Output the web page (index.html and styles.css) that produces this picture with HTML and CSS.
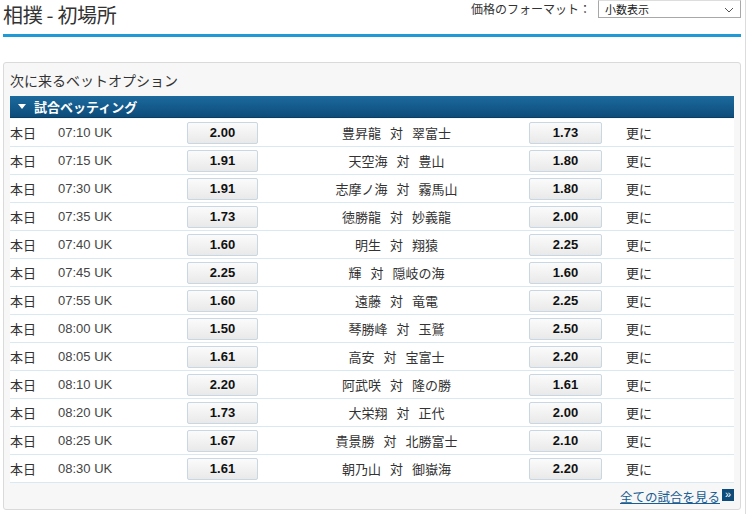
FILE: index.html
```html
<!DOCTYPE html>
<html lang="ja">
<head>
<meta charset="utf-8">
<title>相撲 - 初場所</title>
<link rel="stylesheet" href="styles.css">
</head>
<body>
<div class="page">
  <header class="top">
    <h1 class="title">相撲 - 初場所</h1>
    <div class="format">
      <span class="format-label">価格のフォーマット：</span>
      <div class="select">
        <span>小数表示</span>
        <svg class="chev" width="10" height="6" viewBox="0 0 10 6"><path d="M1 1 L5 5 L9 1" fill="none" stroke="#555" stroke-width="1"/></svg>
      </div>
    </div>
  </header>
  <section class="box">
    <h2 class="box-title">次に来るベットオプション</h2>
    <div class="bar"><span class="tri"></span>試合ベッティング</div>
    <div class="rows">
      <div class="row"><span class="day">本日</span><span class="time">07:10 UK</span><span class="odd">2.00</span><span class="match">豊昇龍<i>対</i>翠富士</span><span class="odd">1.73</span><span class="more">更に</span></div>
      <div class="row"><span class="day">本日</span><span class="time">07:15 UK</span><span class="odd">1.91</span><span class="match">天空海<i>対</i>豊山</span><span class="odd">1.80</span><span class="more">更に</span></div>
      <div class="row"><span class="day">本日</span><span class="time">07:30 UK</span><span class="odd">1.91</span><span class="match">志摩ノ海<i>対</i>霧馬山</span><span class="odd">1.80</span><span class="more">更に</span></div>
      <div class="row"><span class="day">本日</span><span class="time">07:35 UK</span><span class="odd">1.73</span><span class="match">徳勝龍<i>対</i>妙義龍</span><span class="odd">2.00</span><span class="more">更に</span></div>
      <div class="row"><span class="day">本日</span><span class="time">07:40 UK</span><span class="odd">1.60</span><span class="match">明生<i>対</i>翔猿</span><span class="odd">2.25</span><span class="more">更に</span></div>
      <div class="row"><span class="day">本日</span><span class="time">07:45 UK</span><span class="odd">2.25</span><span class="match">輝<i>対</i>隠岐の海</span><span class="odd">1.60</span><span class="more">更に</span></div>
      <div class="row"><span class="day">本日</span><span class="time">07:55 UK</span><span class="odd">1.60</span><span class="match">遠藤<i>対</i>竜電</span><span class="odd">2.25</span><span class="more">更に</span></div>
      <div class="row"><span class="day">本日</span><span class="time">08:00 UK</span><span class="odd">1.50</span><span class="match">琴勝峰<i>対</i>玉鷲</span><span class="odd">2.50</span><span class="more">更に</span></div>
      <div class="row"><span class="day">本日</span><span class="time">08:05 UK</span><span class="odd">1.61</span><span class="match">高安<i>対</i>宝富士</span><span class="odd">2.20</span><span class="more">更に</span></div>
      <div class="row"><span class="day">本日</span><span class="time">08:10 UK</span><span class="odd">2.20</span><span class="match">阿武咲<i>対</i>隆の勝</span><span class="odd">1.61</span><span class="more">更に</span></div>
      <div class="row"><span class="day">本日</span><span class="time">08:20 UK</span><span class="odd">1.73</span><span class="match">大栄翔<i>対</i>正代</span><span class="odd">2.00</span><span class="more">更に</span></div>
      <div class="row"><span class="day">本日</span><span class="time">08:25 UK</span><span class="odd">1.67</span><span class="match">貴景勝<i>対</i>北勝富士</span><span class="odd">2.10</span><span class="more">更に</span></div>
      <div class="row"><span class="day">本日</span><span class="time">08:30 UK</span><span class="odd">1.61</span><span class="match">朝乃山<i>対</i>御嶽海</span><span class="odd">2.20</span><span class="more">更に</span></div>
    </div>
    <div class="foot">
      <a class="all" href="#">全ての試合を見る</a><span class="go">»</span>
    </div>
  </section>
</div>
</body>
</html>
```

FILE: styles.css
```css
html, body {
  margin: 0;
  padding: 0;
  background: #fff;
}
body {
  font-family: "Liberation Sans", Arial, "Noto Sans CJK JP", sans-serif;
  color: #333;
  font-size: 13px;
}
.page {
  width: 746px;
  height: 514px;
  border-right: 1px solid #dcdcdc;
  padding-left: 3px;
  box-sizing: border-box;
}
.top {
  width: 738px;
  height: 34px;
  border-bottom: 3px solid #1e9ad6;
  display: flex;
  justify-content: space-between;
  align-items: flex-start;
}
.title {
  margin: 0;
  padding-top: 3px;
  font-family: "Noto Sans CJK JP", sans-serif;
  font-weight: normal;
  font-size: 20px;
  line-height: 24px;
  color: #333;
  letter-spacing: -0.3px;
}
.format {
  display: flex;
  align-items: flex-start;
}
.format-label {
  font-family: "Noto Sans CJK JP", sans-serif;
  font-size: 12px;
  line-height: 16px;
  margin-top: 1px;
  margin-right: 7px;
  color: #333;
}
.select {
  width: 143px;
  height: 18px;
  border: 1px solid #a8a8a8;
  border-top-color: #ddd;
  box-sizing: border-box;
  display: flex;
  align-items: center;
  justify-content: space-between;
  padding: 0 6px 0 6px;
  font-family: "Noto Sans CJK JP", sans-serif;
  font-size: 11px;
  color: #222;
  background: #fff;
}
.chev { margin-top: 1px; }
.box {
  margin-top: 25px;
  width: 738px;
  height: 448px;
  box-sizing: border-box;
  border: 1px solid #dadada;
  border-radius: 3px;
  background: #f7f7f7;
  padding: 0 6px;
}
.box-title {
  margin: 0;
  padding: 8px 0 6px 0;
  font-family: "Noto Sans CJK JP", sans-serif;
  font-weight: normal;
  font-size: 14px;
  line-height: 19px;
  color: #333;
}
.bar {
  height: 22px;
  background: linear-gradient(#1c6a9e, #0d4c7a);
  border-bottom: 1px solid #0a3d63;
  box-sizing: border-box;
  color: #fff;
  font-family: "Noto Sans CJK JP", sans-serif;
  font-weight: bold;
  font-size: 13px;
  line-height: 20px;
  display: flex;
  align-items: center;
  padding-left: 8px;
}
.tri {
  width: 0;
  height: 0;
  border-left: 4px solid transparent;
  border-right: 4px solid transparent;
  border-top: 5px solid #fff;
  margin-right: 8px;
}
.rows {
  background: #fff;
  margin-top: 1px;
}
.row {
  display: grid;
  grid-template-columns: 48px 129px 71px 271px 73px 1fr;
  align-items: center;
  height: 28px;
  border-bottom: 1px solid #d9e8f3;
  box-sizing: border-box;
}
.day {
  font-family: "Noto Sans CJK JP", sans-serif;
  color: #333;
}
.time {
  color: #444;
}
.odd {
  height: 22px;
  box-sizing: border-box;
  border: 1px solid #c9d6e3;
  border-radius: 2px;
  background: linear-gradient(#fbfbfb, #e9e9e9);
  font-weight: bold;
  color: #111;
  text-align: center;
  line-height: 20px;
  font-size: 13px;
}
.match {
  text-align: center;
  font-family: "Noto Sans CJK JP", sans-serif;
  color: #333;
  padding-left: 6px;
}
.match i {
  font-style: normal;
  margin: 0 9px;
}
.more {
  font-family: "Noto Sans CJK JP", sans-serif;
  padding-left: 24px;
  color: #333;
}
.foot {
  display: flex;
  justify-content: flex-end;
  align-items: center;
  padding-top: 6px;
}
.all {
  font-family: "Noto Sans CJK JP", sans-serif;
  font-size: 12.5px;
  color: #1a5d92;
  text-decoration: underline;
  line-height: 16px;
}
.go {
  width: 12px;
  height: 12px;
  background: #0d4c7a;
  color: #fff;
  font-size: 11px;
  line-height: 10px;
  text-align: center;
  margin-left: 2px;
  margin-top: -4px;
}
```
